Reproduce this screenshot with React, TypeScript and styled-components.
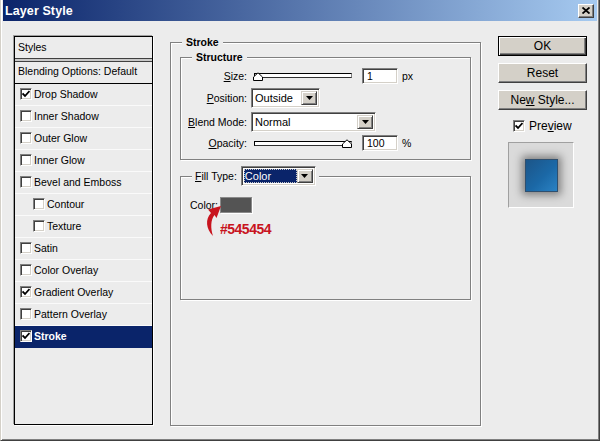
import React from 'react';
import styled, { createGlobalStyle, css } from 'styled-components';

const Global = createGlobalStyle`
  html, body { margin: 0; padding: 0; background: #ececec; }
  body { font-family: "Liberation Sans", Arial, sans-serif; font-size: 10.5px; color: #000; }
  * { box-sizing: border-box; }
`;

const Window = styled.div`
  width: 600px;
  height: 441px;
  background: #ececec;
  border-left: 1px solid #d4d0c8;
  border-right: 1px solid #404040;
  border-bottom: 1px solid #404040;
  box-shadow: inset 1px 0 #fff, inset -1px -1px #808080;
  padding: 0 2px 2px 2px;
  display: flex;
  flex-direction: column;
  overflow: hidden;
`;

const TitleBar = styled.div`
  height: 21px;
  flex: none;
  display: flex;
  align-items: center;
  justify-content: space-between;
  padding: 0 3px 0 2px;
  background: linear-gradient(to right, #0a246a, #a6caf0);
`;

const Title = styled.span`
  color: #fff;
  font-weight: bold;
  font-size: 12.5px;
  letter-spacing: 0.1px;
`;

const CloseButton = styled.div`
  width: 16px;
  height: 14px;
  background: #d4d0c8;
  border: 1px solid;
  border-color: #fff #404040 #404040 #fff;
  box-shadow: inset -1px -1px #808080;
  display: flex;
  align-items: center;
  justify-content: center;
`;

const Body = styled.div`
  flex: 1;
  display: flex;
  align-items: flex-start;
  padding: 15px 0 0 11px;
`;

const StylesPanel = styled.div`
  width: 139px;
  height: 389px;
  flex: none;
  border: 1px solid #000;
  box-shadow: -1px -1px #a0a0a0, 1px 1px #fff;
  display: flex;
  flex-direction: column;
`;

const PanelHeader = styled.div`
  height: 21px;
  display: flex;
  align-items: center;
  padding: 0 0 2px 3px;
`;

const PanelDivider = styled.div`
  height: 4px;
  border-top: 1px solid #404040;
  border-bottom: 1px solid #404040;
  background: #c8c8c8;
`;

const BlendRow = styled.div`
  height: 22px;
  display: flex;
  align-items: center;
  padding: 0 0 3px 3px;
  border-bottom: 1px solid #000;
`;

const StyleRow = styled.div<{ $indent?: boolean; $selected?: boolean }>`
  height: 22px;
  display: flex;
  align-items: center;
  gap: 2px;
  padding: 0 0 2px ${p => (p.$indent ? 18 : 5)}px;
  border-bottom: 1px solid #fafafa;
  ${p =>
    p.$selected &&
    css`
      background: #0a246a;
      color: #fff;
      font-weight: bold;
      border-bottom-color: #0a246a;
    `}
`;

const CheckBox = styled.span`
  width: 12px;
  height: 12px;
  flex: none;
  background: #fff;
  border: 1px solid;
  border-color: #808080 #fff #fff #808080;
  box-shadow: inset 1px 1px #404040, inset -1px -1px #d4d0c8;
  display: inline-flex;
  align-items: center;
  justify-content: center;
`;

const StrokeGroup = styled.fieldset`
  margin: 0 0 0 17px;
  width: 311px;
  height: 390px;
  flex: none;
  min-width: 0;
  padding: 0 9px;
  border: 1px solid #808080;
  box-shadow: inset 1px 1px #fff, 1px 1px #fff;
`;

const GroupLegend = styled.legend`
  font-weight: bold;
  line-height: 13px;
  padding: 0 4px;
  margin-left: 2px;
  background: #ececec;
`;

const SubGroup = styled.fieldset<{ $height?: number }>`
  margin: 2px 0 0 0;
  min-width: 0;
  padding: 0 9px 8px;
  border: 1px solid #808080;
  box-shadow: inset 1px 1px #fff, 1px 1px #fff;
  ${p => p.$height && css`height: ${p.$height}px;`}
`;

const FillGroup = styled(SubGroup)`
  margin-top: 6px;
`;

const FillLegend = styled.legend`
  display: flex;
  align-items: center;
  gap: 4px;
  height: 20px;
  padding: 0 3px;
  margin-left: 2px;
  background: #ececec;
`;

const ControlGrid = styled.div`
  display: grid;
  grid-template-columns: 57px auto;
  grid-template-rows: 17px 21px 21px 16px;
  column-gap: 4px;
  row-gap: 3px;
  align-items: center;
  margin-top: 3px;
`;

const Label = styled.span`
  justify-self: end;
  white-space: nowrap;
`;

const ControlRow = styled.div`
  display: flex;
  align-items: center;
`;

const SliderWrap = styled.div`
  position: relative;
  width: 98px;
  height: 10px;
  margin: 0 10px 0 3px;
  display: flex;
  align-items: center;
`;

const SliderTrack = styled.div`
  width: 100%;
  height: 5px;
  background: #fff;
  border-top: 1px solid #000;
  border-bottom: 1px solid #303030;
  border-left: 1px solid #000;
  border-right: 1px solid #808080;
`;

const Thumb = styled.svg`
  position: absolute;
  top: 1px;
`;

const NumInput = styled.div`
  width: 36px;
  height: 16px;
  background: #fff;
  border: 1px solid;
  border-color: #808080 #fff #fff #808080;
  box-shadow: inset 1px 1px #404040, inset -1px -1px #d4d0c8;
  padding-left: 4px;
  display: flex;
  align-items: center;
`;

const Unit = styled.span`
  margin-left: 4px;
`;

const Select = styled.div<{ $width: number }>`
  width: ${p => p.$width}px;
  height: 20px;
  background: #fff;
  border: 1px solid;
  border-color: #808080 #fff #fff #808080;
  box-shadow: inset 1px 1px #404040, inset -1px -1px #d4d0c8;
  display: flex;
  align-items: stretch;
  padding: 2px;
`;

const SelectValue = styled.span<{ $active?: boolean }>`
  flex: 1;
  display: flex;
  align-items: center;
  padding-left: 1px;
  font-size: 11px;
  ${p =>
    p.$active &&
    css`
      background: #0a246a;
      color: #fff;
      outline: 1px dotted #c8c8c8;
      outline-offset: -1px;
    `}
`;

const DropButton = styled.span`
  width: 16px;
  flex: none;
  background: #d4d0c8;
  border: 1px solid;
  border-color: #d4d0c8 #404040 #404040 #d4d0c8;
  box-shadow: inset 1px 1px #fff, inset -1px -1px #808080;
  display: flex;
  align-items: center;
  justify-content: center;
`;

const FillContent = styled.div`
  position: relative;
  display: flex;
  align-items: center;
  gap: 2px;
  margin-top: 11px;
`;

const Swatch = styled.div<{ $color: string }>`
  width: 32px;
  height: 16px;
  background: ${p => p.$color};
  border: 1px solid #8a8a8a;
  box-shadow: 1px 1px #fff;
`;

const Annotation = styled.div`
  position: absolute;
  left: 14px;
  top: 6px;
  display: flex;
  align-items: flex-start;
`;

const AnnotationText = styled.span`
  margin-top: 18px;
  margin-left: -6px;
  color: #c8141e;
  font-family: "Liberation Sans", Arial, sans-serif;
  font-weight: bold;
  font-size: 14px;
  letter-spacing: -0.5px;
  transform: scaleY(1.05);
`;

const RightColumn = styled.div`
  width: 89px;
  margin-left: 17px;
  flex: none;
  display: flex;
  flex-direction: column;
`;

const ButtonStack = styled.div`
  display: flex;
  flex-direction: column;
  gap: 7px;
`;

const Button = styled.div<{ $default?: boolean }>`
  height: 20px;
  background: #d4d0c8;
  display: flex;
  align-items: center;
  justify-content: center;
  font-size: 12px;
  border: 1px solid;
  border-color: #fff #404040 #404040 #fff;
  box-shadow: inset -1px -1px #808080;
  ${p =>
    p.$default &&
    css`
      border: 1px solid #000;
      box-shadow: inset 1px 1px #fff, inset -1px -1px #404040, inset -2px -2px #808080;
    `}
`;

const PreviewToggle = styled.label`
  display: flex;
  align-items: center;
  gap: 4px;
  margin: 9px 0 0 15px;
  font-size: 12px;
`;

const PreviewBox = styled.div`
  width: 66px;
  height: 66px;
  margin: 9px 0 0 10px;
  background: #dadada;
  border: 1px solid;
  border-color: #a0a0a0 #fff #fff #a0a0a0;
  display: flex;
  align-items: center;
  justify-content: center;
`;

const PreviewSwatch = styled.div`
  width: 33px;
  height: 33px;
  border: 1px solid #2f4f6e;
  background: linear-gradient(135deg, #1c5588 0%, #1b68a6 55%, #2a82c4 100%);
  box-shadow: 0 0 8px 3px rgba(0, 0, 0, 0.42);
`;

const Check = () => (
  <svg width="8" height="8" viewBox="0 0 8 8">
    <path d="M0.5 3.5 L3 6 L7.5 1" fill="none" stroke="#000" strokeWidth="1.8" />
  </svg>
);

const DownArrow = () => (
  <svg width="7" height="4" viewBox="0 0 7 4">
    <path d="M0 0 H7 L3.5 4 Z" fill="#000" />
  </svg>
);

const styleItems: { name: string; checked?: boolean; indent?: boolean; selected?: boolean }[] = [
  { name: 'Drop Shadow', checked: true },
  { name: 'Inner Shadow' },
  { name: 'Outer Glow' },
  { name: 'Inner Glow' },
  { name: 'Bevel and Emboss' },
  { name: 'Contour', indent: true },
  { name: 'Texture', indent: true },
  { name: 'Satin' },
  { name: 'Color Overlay' },
  { name: 'Gradient Overlay', checked: true },
  { name: 'Pattern Overlay' },
  { name: 'Stroke', checked: true, selected: true },
];

const Slider = ({ value }: { value: number }) => (
  <SliderWrap>
    <SliderTrack />
    <Thumb width="10" height="9" viewBox="0 0 10 9" style={{ left: `${(value / 100) * 89 - 1}px` }}>
      <path d="M0.5 8.5 V5 L5 0.8 L9.5 5 V8.5 Z" fill="#fff" stroke="#000" strokeWidth="1" />
    </Thumb>
  </SliderWrap>
);

export default function App() {
  return (
    <>
      <Global />
      <Window>
        <TitleBar>
          <Title>Layer Style</Title>
          <CloseButton>
            <svg width="8" height="7" viewBox="0 0 8 7">
              <path d="M0.5 0.5 L7.5 6.5 M7.5 0.5 L0.5 6.5" stroke="#000" strokeWidth="1.8" />
            </svg>
          </CloseButton>
        </TitleBar>
        <Body>
          <StylesPanel>
            <PanelHeader>Styles</PanelHeader>
            <PanelDivider />
            <BlendRow>Blending Options: Default</BlendRow>
            {styleItems.map(item => (
              <StyleRow key={item.name} $indent={item.indent} $selected={item.selected}>
                <CheckBox>{item.checked && <Check />}</CheckBox>
                <span>{item.name}</span>
              </StyleRow>
            ))}
          </StylesPanel>

          <StrokeGroup>
            <GroupLegend>Stroke</GroupLegend>
            <SubGroup>
              <GroupLegend>Structure</GroupLegend>
              <ControlGrid>
                <Label>
                  <u>S</u>ize:
                </Label>
                <ControlRow>
                  <Slider value={0} />
                  <NumInput>1</NumInput>
                  <Unit>px</Unit>
                </ControlRow>
                <Label>
                  <u>P</u>osition:
                </Label>
                <ControlRow>
                  <Select $width={69}>
                    <SelectValue>Outside</SelectValue>
                    <DropButton>
                      <DownArrow />
                    </DropButton>
                  </Select>
                </ControlRow>
                <Label>
                  <u>B</u>lend Mode:
                </Label>
                <ControlRow>
                  <Select $width={125}>
                    <SelectValue>Normal</SelectValue>
                    <DropButton>
                      <DownArrow />
                    </DropButton>
                  </Select>
                </ControlRow>
                <Label>
                  <u>O</u>pacity:
                </Label>
                <ControlRow>
                  <Slider value={100} />
                  <NumInput>100</NumInput>
                  <Unit>%</Unit>
                </ControlRow>
              </ControlGrid>
            </SubGroup>

            <FillGroup $height={134}>
              <FillLegend>
                <span>
                  <u>F</u>ill Type:
                </span>
                <Select $width={75}>
                  <SelectValue $active>Color</SelectValue>
                  <DropButton>
                    <DownArrow />
                  </DropButton>
                </Select>
              </FillLegend>
              <FillContent>
                <span>Color:</span>
                <Swatch $color="#545454" />
                <Annotation>
                  <svg width="22" height="34" viewBox="0 0 22 34">
                    <path
                      d="M9 33 C2 26, 1 16, 7 10 L4 6.5 L17 3 L12.5 15 L10.5 12 C6.5 17, 6.5 25, 9 33 Z"
                      fill="#c8141e"
                    />
                  </svg>
                  <AnnotationText>#545454</AnnotationText>
                </Annotation>
              </FillContent>
            </FillGroup>
          </StrokeGroup>

          <RightColumn>
            <ButtonStack>
              <Button $default>OK</Button>
              <Button>Reset</Button>
              <Button>
                <span>
                  Ne<u>w</u> Style...
                </span>
              </Button>
            </ButtonStack>
            <PreviewToggle>
              <CheckBox>
                <Check />
              </CheckBox>
              <span>
                Pre<u>v</u>iew
              </span>
            </PreviewToggle>
            <PreviewBox>
              <PreviewSwatch />
            </PreviewBox>
          </RightColumn>
        </Body>
      </Window>
    </>
  );
}
